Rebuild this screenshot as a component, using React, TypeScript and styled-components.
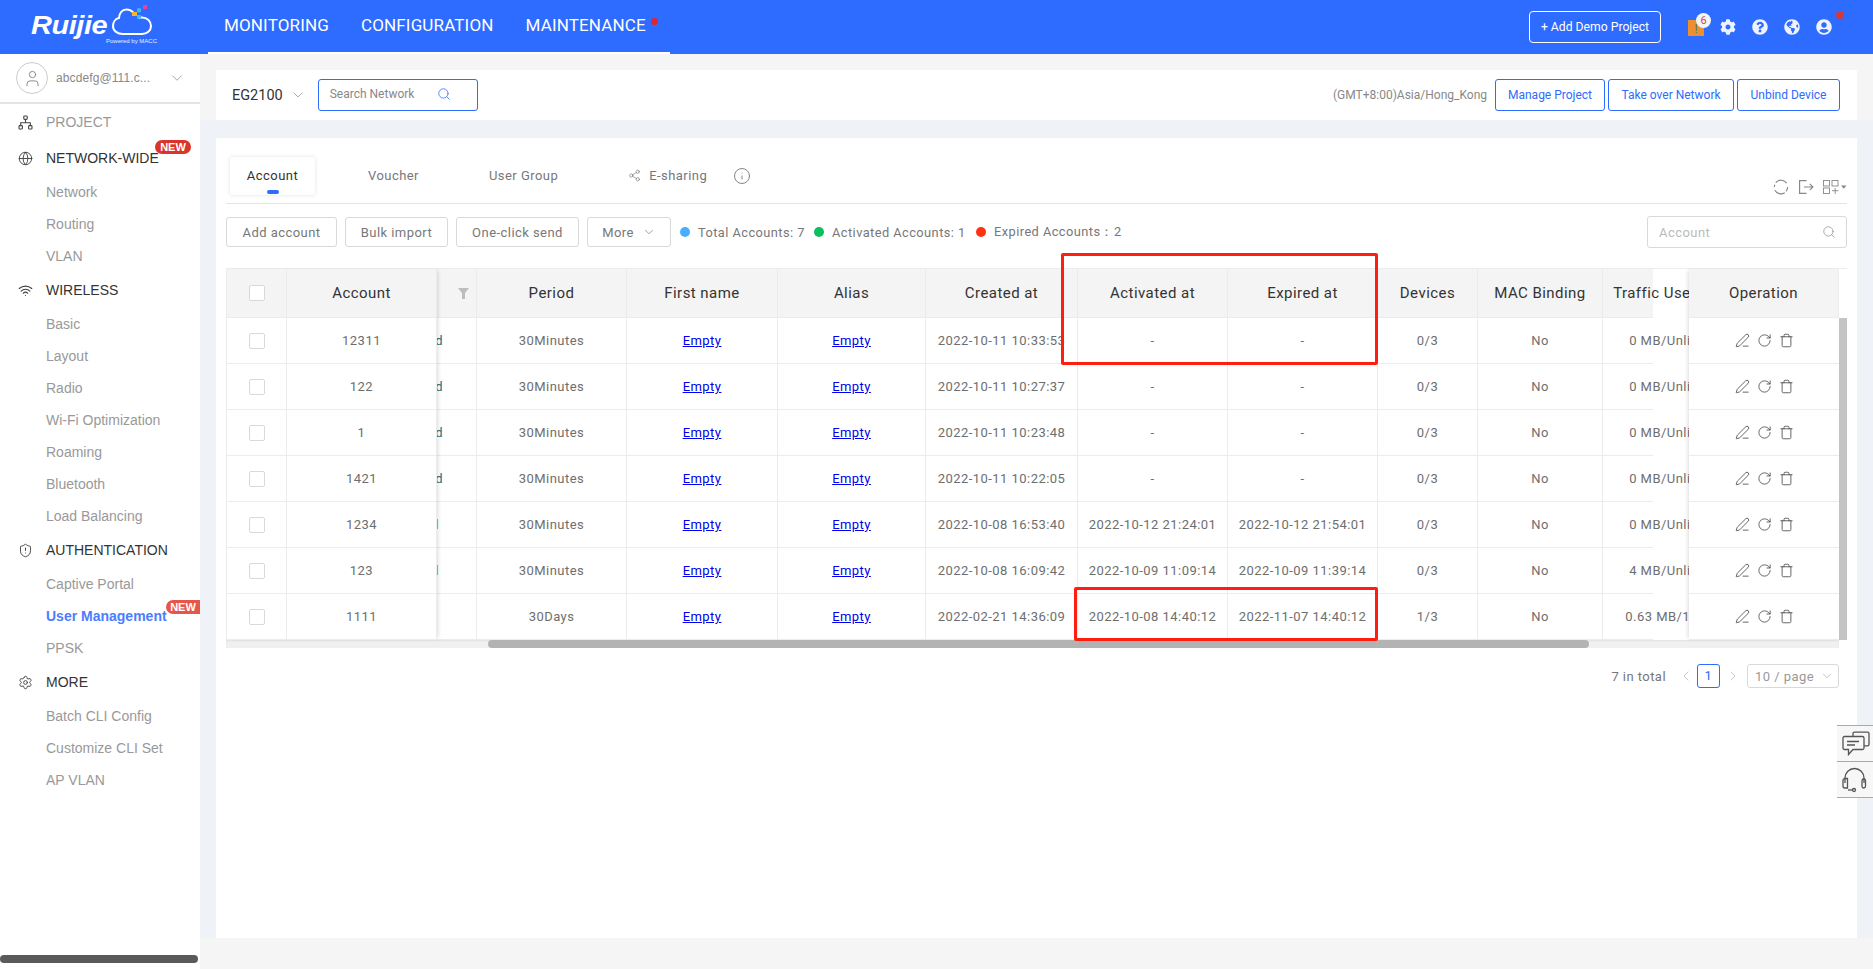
import React from "react";
import styled, { createGlobalStyle } from "styled-components";
import {
  ChevronDown, ChevronLeft, ChevronRight, Globe, Info, PenLine, RotateCw, Search,
  Settings, Share2, ShieldAlert, Trash, User, Wifi,
} from "lucide-react";
import { FaCog, FaGlobeAmericas, FaQuestionCircle, FaUserCircle } from "react-icons/fa";

const GlobalStyle = createGlobalStyle`
  html, body { margin: 0; height: 100%; overflow: hidden; }
  * { box-sizing: border-box; }
  body { font-family: Roboto, "Liberation Sans", sans-serif; background: #f0f3f6; }
`;

const Page = styled.div`
  position: relative;
  display: flex;
  flex-direction: column;
  width: 1873px;
  height: 969px;
  overflow: hidden;
`;

/* top bar */
const TopBar = styled.header`
  display: flex;
  align-items: stretch;
  height: 54px;
  background: #2e6bff;
  color: #fff;
  flex: none;
`;
const LogoBox = styled.div`
  width: 208px;
  padding: 4px 0 0 31px;
  flex: none;
`;
const LogoRow = styled.div`
  display: flex;
  align-items: flex-start;
  height: 33px;
`;
const LogoWord = styled.span`
  font-family: "Liberation Sans", sans-serif;
  font-style: italic;
  font-weight: 700;
  font-size: 25px;
  line-height: 25px;
  margin-top: 9px;
  width: 81px;
  letter-spacing: -0.4px;
  transform: scaleX(1.16);
  transform-origin: left;
`;
const PoweredBy = styled.div`
  font-family: "Liberation Sans", sans-serif;
  font-size: 6px;
  line-height: 8px;
  margin-left: 75px;
  opacity: 0.9;
  white-space: nowrap;
`;
const NavBar = styled.nav`
  display: flex;
  gap: 32px;
  width: 462px;
  padding: 0 16px;
  border-bottom: 2px solid #fff;
`;
const NavItem = styled.a`
  position: relative;
  font-size: 17px;
  line-height: 50px;
  letter-spacing: 0.15px;
`;
const NavDot = styled.i`
  position: absolute;
  top: 18px;
  right: -12px;
  width: 7px;
  height: 7px;
  border-radius: 50%;
  background: #e0262b;
`;
const TopRight = styled.div`
  display: flex;
  align-items: center;
  margin-left: auto;
  padding-right: 41px;
`;
const DemoButton = styled.button`
  width: 132px;
  height: 32px;
  margin-right: 27px;
  background: transparent;
  border: 1px solid #fff;
  border-radius: 4px;
  color: #fff;
  font: 12.2px Roboto, sans-serif;
`;
const TopIcons = styled.div`
  display: flex;
  align-items: center;
  gap: 16px;
`;
const TopIcon = styled.span`
  position: relative;
  display: flex;
  width: 16px;
  height: 16px;
  color: #eef3ff;
`;
const AlertSquare = styled.span`
  position: relative;
  display: block;
  width: 16px;
  height: 16px;
  margin-top: 1px;
  background: #ee8f2e;
  color: #3f6fd8;
  font-size: 13px;
  line-height: 18px;
  text-align: center;
`;
const CountBadge = styled.span`
  position: absolute;
  top: -7px;
  left: 8px;
  width: 15px;
  height: 15px;
  border-radius: 50%;
  background: #f4f4f4;
  color: #d9404a;
  font-size: 11px;
  line-height: 15px;
  text-align: center;
`;
const UserDot = styled.i`
  position: absolute;
  top: -8px;
  right: -12px;
  width: 8px;
  height: 8px;
  border-radius: 50%;
  background: #d33a3a;
`;

/* sidebar */
const Body = styled.div`
  display: flex;
  flex: 1;
  min-height: 0;
`;
const Sidebar = styled.aside`
  display: flex;
  flex-direction: column;
  width: 200px;
  flex: none;
  background: #fff;
  font-family: "Liberation Sans", sans-serif;
  font-size: 14px;
`;
const UserRow = styled.div`
  display: flex;
  align-items: center;
  height: 50px;
  padding: 0 0 0 16px;
  border-bottom: 2px solid #e4e4e4;
  color: #888;
  font-size: 12px;
`;
const Avatar = styled.span`
  display: flex;
  align-items: center;
  justify-content: center;
  width: 32px;
  height: 32px;
  margin-right: 8px;
  border: 1px solid #ccc;
  border-radius: 50%;
  color: #888;
`;
const UserName = styled.span`
  width: 112px;
  letter-spacing: 0.1px;
`;
const SideList = styled.div`
  flex: 1;
`;
const Heading = styled.div<{ $muted?: boolean }>`
  position: relative;
  display: flex;
  align-items: center;
  height: 36px;
  padding-left: 18px;
  color: ${(p) => (p.$muted ? "#999" : "#333")};
  svg { margin-right: 13px; color: #444; }
`;
const SubItem = styled.div<{ $active?: boolean }>`
  position: relative;
  height: 32px;
  padding-left: 46px;
  line-height: 32px;
  color: ${(p) => (p.$active ? "#4a7dff" : "#999")};
  font-weight: ${(p) => (p.$active ? 700 : 400)};
`;
const NewBadge = styled.span<{ $soft?: boolean }>`
  position: absolute;
  top: 0;
  left: ${(p) => (p.$soft ? "166px" : "155px")};
  width: ${(p) => (p.$soft ? "34px" : "36px")};
  height: 14px;
  border-radius: ${(p) => (p.$soft ? "7px 0 0 7px" : "7px")};
  background: ${(p) => (p.$soft ? "#e5574a" : "#d9352a")};
  color: #fff;
  font-size: 11px;
  font-weight: 700;
  line-height: 14px;
  text-align: center;
`;
const SideScroll = styled.div`
  width: 198px;
  height: 8px;
  margin-bottom: 6px;
  border-radius: 4px;
  background: #5a5a5a;
`;

/* main */
const Main = styled.main`
  display: flex;
  flex-direction: column;
  flex: 1;
  gap: 18px;
  padding: 16px 16px 31px;
  min-width: 0;
  background: linear-gradient(#f5f5f5 0 66px, #eff3f7 66px calc(100% - 31px), #f5f5f5 calc(100% - 31px));
`;
const HeaderCard = styled.div`
  display: flex;
  align-items: center;
  height: 50px;
  padding: 0 17px 0 16px;
  background: #fff;
  font-size: 12px;
`;
const NetName = styled.span`
  font-size: 14.5px;
  color: #333;
`;
const NetChevron = styled.span`
  display: flex;
  margin: 0 12px 0 7px;
  color: #888;
`;
const NetSearch = styled.div`
  display: flex;
  align-items: center;
  justify-content: space-between;
  width: 160px;
  height: 32px;
  padding: 0 26px 2px 11px;
  border: 1px solid #2e6bff;
  border-radius: 3px;
  color: #888;
  svg { color: #2e6bff; }
`;
const TimeZone = styled.span`
  margin: 0 5px 0 auto;
  color: #888;
`;
const HeaderButton = styled.button<{ $width: number }>`
  width: ${(p) => p.$width}px;
  height: 32px;
  margin-left: 3px;
  background: #fff;
  border: 1px solid #2e6bff;
  border-radius: 3px;
  color: #2e6bff;
  font: 12px Roboto, sans-serif;
`;
const MainCard = styled.section`
  flex: 1;
  padding: 19px 10px 0;
  background: #fff;
  color: #6e6e6e;
  font-size: 13px;
  letter-spacing: 0.45px;
`;
const TabsRow = styled.div`
  display: flex;
  align-items: center;
  height: 47px;
  padding: 0 0 9px 4px;
  border-bottom: 1px solid #e4e4e4;
`;
const TabList = styled.div`
  display: flex;
  align-items: center;
  gap: 70px;
`;
const Tab = styled.div<{ $active?: boolean }>`
  position: relative;
  display: flex;
  align-items: center;
  gap: 8px;
  color: ${(p) => (p.$active ? "#333" : "#777")};
  ${(p) =>
    p.$active
      ? `width: 85px; height: 38px; margin-right: -17px; justify-content: center; border-radius: 4px;
         box-shadow: 0 0 4px rgba(0,0,0,.12);`
      : ""}
`;
const TabPill = styled.i`
  position: absolute;
  left: 37px;
  bottom: 1px;
  width: 12px;
  height: 4px;
  border-radius: 2px;
  background: #2e6bff;
`;
const TabInfo = styled.span`
  display: flex;
  margin-left: 26px;
  color: #777;
`;
const ToolIcons = styled.div`
  display: flex;
  align-items: center;
  gap: 9px;
  margin-left: auto;
  margin-bottom: -22px;
  color: #888;
`;
const Toolbar = styled.div`
  display: flex;
  align-items: center;
  gap: 8px;
  height: 32px;
  margin-top: 12px;
`;
const ToolButton = styled.button<{ $width: number }>`
  display: flex;
  align-items: center;
  justify-content: center;
  gap: 8px;
  width: ${(p) => p.$width}px;
  height: 30px;
  background: #fff;
  border: 1px solid #d9d9d9;
  border-radius: 3px;
  color: #777;
  font: 13px Roboto, sans-serif;
  letter-spacing: 0.45px;
`;
const Legend = styled.div`
  display: flex;
  align-items: center;
  margin-left: 1px;
`;
const LegendDot = styled.i<{ $color: string }>`
  width: 10px;
  height: 10px;
  margin: 0 8px 0 0;
  border-radius: 50%;
  background: ${(p) => p.$color};
`;
const LegendText = styled.span<{ $width?: number }>`
  width: ${(p) => (p.$width ? `${p.$width}px` : "auto")};
  color: #777;
  font-size: 12.8px;
  white-space: nowrap;
`;
const AccountSearch = styled.div`
  display: flex;
  align-items: center;
  justify-content: space-between;
  width: 200px;
  height: 32px;
  margin-left: auto;
  padding: 0 10px 0 11px;
  border: 1px solid #d9d9d9;
  border-radius: 3px;
  color: #bbb;
  svg { color: #888; }
`;

/* table */
const TableFrame = styled.div`
  position: relative;
  margin-top: 20px;
`;
const TableBody = styled.div`
  display: flex;
  height: 372px;
  border-top: 1px solid #ececec;
  border-left: 1px solid #ececec;
`;
const FixedPane = styled.div<{ $side: "left" | "right" }>`
  position: relative;
  z-index: 1;
  flex: none;
  background: #fff;
  box-shadow: ${(p) => (p.$side === "left" ? "3px 0 4px -2px rgba(0,0,0,.14)" : "-3px 0 4px -2px rgba(0,0,0,.14)")};
`;
const ScrollPane = styled.div`
  flex: 1;
  min-width: 0;
  overflow: hidden;
`;
const ScrollInner = styled.div`
  width: 1296px;
  margin-left: -80px;
`;
const Row = styled.div<{ $cols: string; $head?: boolean }>`
  display: grid;
  grid-template-columns: ${(p) => p.$cols};
  height: ${(p) => (p.$head ? "49px" : "46px")};
  background: ${(p) => (p.$head ? "#f4f4f4" : "#fff")};
  border-bottom: 1px solid #ececec;
  color: ${(p) => (p.$head ? "#333" : "#6e6e6e")};
  font-size: ${(p) => (p.$head ? "15px" : "13px")};
`;
const Cell = styled.div`
  display: flex;
  align-items: center;
  justify-content: center;
  border-right: 1px solid #ececec;
  white-space: nowrap;
  overflow: hidden;
`;
const StatusCell = styled(Cell)<{ $pad: number; $color: string }>`
  justify-content: flex-end;
  padding-right: ${(p) => p.$pad}px;
  color: ${(p) => p.$color};
`;
const Check = styled.span`
  width: 16px;
  height: 16px;
  background: #fff;
  border: 1px solid #d9d9d9;
  border-radius: 2px;
`;
const EmptyLink = styled.a`
  color: #0000ee;
  text-decoration: underline;
`;
const Actions = styled(Cell)`
  gap: 7px;
  color: #444;
  border-right: none;
`;
const VScroll = styled.div`
  width: 8px;
  flex: none;
  padding-top: 49px;
`;
const VThumb = styled.div`
  height: 322px;
  background: #c4c4c4;
`;
const HScroll = styled.div`
  width: 1613px;
  height: 8px;
  background: #f0f0f0;
  box-shadow: inset 0 1px 2px rgba(0,0,0,.06);
`;
const HThumb = styled.div`
  width: 1101px;
  height: 8px;
  margin-left: 262px;
  border-radius: 4px;
  background: #b3b3b3;
`;
const Annotation = styled.div<{ $left: number; $top: number; $width: number; $height: number }>`
  position: absolute;
  z-index: 2;
  left: ${(p) => p.$left}px;
  top: ${(p) => p.$top}px;
  width: ${(p) => p.$width}px;
  height: ${(p) => p.$height}px;
  border: 3px solid #ff1c10;
  border-radius: 2px;
  pointer-events: none;
`;

/* pagination */
const Pager = styled.div`
  display: flex;
  align-items: center;
  justify-content: flex-end;
  margin-top: 16px;
  padding-right: 8px;
  height: 24px;
  color: #777;
  font-size: 13px;
`;
const PagerArrow = styled.span<{ $left: number; $right: number }>`
  display: flex;
  margin: 0 ${(p) => p.$right}px 0 ${(p) => p.$left}px;
  color: #bbb;
`;
const PageBox = styled.span`
  width: 23px;
  height: 24px;
  border: 1px solid #2e6bff;
  border-radius: 3px;
  color: #2e6bff;
  line-height: 22px;
  text-align: center;
`;
const PageSize = styled.span`
  display: flex;
  align-items: center;
  justify-content: space-between;
  width: 92px;
  height: 24px;
  padding: 0 4px 0 7px;
  border: 1px solid #d9d9d9;
  border-radius: 3px;
  color: #999;
`;

/* floating help */
const Floating = styled.div`
  position: absolute;
  top: 725px;
  right: 0;
  z-index: 3;
  width: 36px;
  background: #f7f7f7;
  border-bottom: 1px solid #aaa;
`;
const FloatingItem = styled.div`
  display: flex;
  align-items: center;
  height: 36px;
  padding-left: 5px;
  border-top: 1px solid #aaa;
  color: #555;
`;

const LEFT_COLS = "60px 150px";
const MID_COLS = "120px 150px 151px 148px 152px 150px 150px 100px 125px 150px";

const rows = [
  { account: "12311", status: "Inactivated", pad: 33, color: "#2b6f7a", period: "30Minutes", created: "2022-10-11 10:33:53", activated: "-", expired: "-", devices: "0/3", traffic: "0 MB/Unlimited" },
  { account: "122", status: "Inactivated", pad: 33, color: "#2b6f7a", period: "30Minutes", created: "2022-10-11 10:27:37", activated: "-", expired: "-", devices: "0/3", traffic: "0 MB/Unlimited" },
  { account: "1", status: "Inactivated", pad: 33, color: "#2b6f7a", period: "30Minutes", created: "2022-10-11 10:23:48", activated: "-", expired: "-", devices: "0/3", traffic: "0 MB/Unlimited" },
  { account: "1421", status: "Inactivated", pad: 33, color: "#2b6f7a", period: "30Minutes", created: "2022-10-11 10:22:05", activated: "-", expired: "-", devices: "0/3", traffic: "0 MB/Unlimited" },
  { account: "1234", status: "Expired", pad: 37, color: "#58b0f5", period: "30Minutes", created: "2022-10-08 16:53:40", activated: "2022-10-12 21:24:01", expired: "2022-10-12 21:54:01", devices: "0/3", traffic: "0 MB/Unlimited" },
  { account: "123", status: "Expired", pad: 37, color: "#58b0f5", period: "30Minutes", created: "2022-10-08 16:09:42", activated: "2022-10-09 11:09:14", expired: "2022-10-09 11:39:14", devices: "0/3", traffic: "4 MB/Unlimited" },
  { account: "1111", status: "Activated", pad: 60, color: "#20b060", period: "30Days", created: "2022-02-21 14:36:09", activated: "2022-10-08 14:40:12", expired: "2022-11-07 14:40:12", devices: "1/3", traffic: "0.63 MB/100 MB" },
];

const sideGroups = [
  { icon: <ProjectIcon />, title: "PROJECT", muted: true, items: [] as string[] },
  { icon: <Globe size={15} strokeWidth={1.5} />, title: "NETWORK-WIDE", isNew: true, items: ["Network", "Routing", "VLAN"] },
  { icon: <Wifi size={15} strokeWidth={1.8} />, title: "WIRELESS", items: ["Basic", "Layout", "Radio", "Wi-Fi Optimization", "Roaming", "Bluetooth", "Load Balancing"] },
  { icon: <ShieldAlert size={15} strokeWidth={1.5} />, title: "AUTHENTICATION", items: ["Captive Portal", "User Management", "PPSK"] },
  { icon: <Settings size={15} strokeWidth={1.5} />, title: "MORE", items: ["Batch CLI Config", "Customize CLI Set", "AP VLAN"] },
];

function ProjectIcon() {
  return (
    <svg width="15" height="15" viewBox="0 0 15 15" fill="none" stroke="currentColor" strokeWidth="1.1">
      <rect x="5.8" y="1" width="3.4" height="3.4" rx="0.8" />
      <rect x="1" y="10.6" width="3.4" height="3.4" rx="0.8" />
      <rect x="10.6" y="10.6" width="3.4" height="3.4" rx="0.8" />
      <path d="M7.5 4.4v3.4M2.7 10.6V7.8h9.6v2.8" />
    </svg>
  );
}

function CloudLogo() {
  return (
    <svg width="40" height="32" viewBox="0 0 40 32" fill="none" style={{ flex: "none" }}>
      <path
        d="M27 13.8c1-.3 2-.4 3-.4 5 0 9 3.8 9 8.6 0 4.8-4 8-9 8H11C5.500 30 1 27 1 22c0-4 2.500-7.300 6-8 .4-4.800 3-8.500 7.500-8.500 2.500 0 4.800 1 6.500 2.800"
        stroke="#fff"
        strokeWidth="2"
        strokeLinecap="round"
      />
      <rect x="31" y="1" width="4" height="4" fill="#f0409a" />
      <rect x="25" y="4.300" width="4" height="4" fill="#3fb8ee" />
      <rect x="20" y="8" width="5" height="4" fill="#f5b62a" />
      <rect x="25" y="11" width="4" height="3.500" fill="#3fb8ee" />
    </svg>
  );
}

function SyncIcon() {
  return (
    <svg width="16" height="16" viewBox="0 0 15 15" fill="none" stroke="currentColor" strokeWidth="1.1">
      <path d="M2.600 3.500A6.300 6.300 0 0 1 12.800 4M13.700 7.500a6.300 6.300 0 0 1-1.400 4M11 12.800A6.300 6.300 0 0 1 1.800 10.500M1.300 7.500c0-.8.100-1.500.4-2.200" />
    </svg>
  );
}

function ExportIcon() {
  return (
    <svg width="16" height="16" viewBox="0 0 15 15" fill="none" stroke="currentColor" strokeWidth="1.1">
      <path d="M8 1.500H1.500v12H8M5.500 7.500h8.500M11 4.500l3 3-3 3" />
    </svg>
  );
}

function ColumnsIcon() {
  return (
    <svg width="24" height="16" viewBox="0 0 24 15" fill="none" stroke="currentColor" strokeWidth="0.9">
      <rect x="0.500" y="1" width="6" height="5.500" />
      <rect x="9" y="1" width="6" height="5.500" />
      <rect x="0.500" y="8.500" width="6" height="5.500" />
      <path d="M9 11.200h6.500M12.200 8.500v6" />
      <path d="M18 6h5.500l-2.750 3.300z" fill="currentColor" stroke="none" />
    </svg>
  );
}

function FilterIcon() {
  return (
    <svg width="11" height="11" viewBox="0 0 11 11" fill="#bdbdbd">
      <path d="M0 0h11L7 5v6H4V5z" />
    </svg>
  );
}

function ChatIcon() {
  return (
    <svg width="28" height="26" viewBox="0 0 28 26" fill="none" stroke="currentColor" strokeWidth="1.300">
      <path d="M11 5V2.500c0-.8.600-1.400 1.400-1.400h13.200c.8 0 1.400.6 1.400 1.400v11c0 .8-.6 1.400-1.400 1.400H22" />
      <path d="M2.500 5.500h18c.8 0 1.500.7 1.500 1.500v10c0 .8-.7 1.500-1.500 1.500H11l-4.500 5v-5h-4C1.700 18.500 1 17.800 1 17V7c0-.8.700-1.500 1.500-1.500z" />
      <path d="M5 10.500h12M5 14h8" />
    </svg>
  );
}

function HeadsetIcon() {
  return (
    <svg width="26" height="26" viewBox="0 0 26 26" fill="none" stroke="currentColor" strokeWidth="1.300">
      <path d="M3 16V11a9.500 9.500 0 0 1 19 0v5" />
      <path d="M3 11.500h0c-1.200 0-2 .9-2 2V19c0 1.100.8 2 2 2h2.500V11.500z" />
      <rect x="20" y="12" width="3.500" height="9" rx="1.700" />
      <path d="M6 23h4.500" />
      <circle cx="12" cy="23" r="1.500" />
    </svg>
  );
}

export default function App() {
  return (
    <Page>
      <GlobalStyle />
      <TopBar>
        <LogoBox>
          <LogoRow>
            <LogoWord>Ruijie</LogoWord>
            <CloudLogo />
          </LogoRow>
          <PoweredBy>Powered by MACC</PoweredBy>
        </LogoBox>
        <NavBar>
          <NavItem>MONITORING</NavItem>
          <NavItem>CONFIGURATION</NavItem>
          <NavItem>
            MAINTENANCE
            <NavDot />
          </NavItem>
        </NavBar>
        <TopRight>
          <DemoButton>+ Add Demo Project</DemoButton>
          <TopIcons>
            <TopIcon>
              <AlertSquare>
                !<CountBadge>6</CountBadge>
              </AlertSquare>
            </TopIcon>
            <TopIcon><FaCog size={16} /></TopIcon>
            <TopIcon><FaQuestionCircle size={16} /></TopIcon>
            <TopIcon><FaGlobeAmericas size={16} /></TopIcon>
            <TopIcon>
              <FaUserCircle size={16} />
              <UserDot />
            </TopIcon>
          </TopIcons>
        </TopRight>
      </TopBar>
      <Body>
        <Sidebar>
          <UserRow>
            <Avatar><User size={19} strokeWidth={1.2} /></Avatar>
            <UserName>abcdefg@111.c...</UserName>
            <ChevronDown size={18} strokeWidth={1} />
          </UserRow>
          <SideList>
            {sideGroups.map((group) => (
              <React.Fragment key={group.title}>
                <Heading $muted={group.muted}>
                  {group.icon}
                  {group.title}
                  {group.isNew && <NewBadge>NEW</NewBadge>}
                </Heading>
                {group.items.map((item) => (
                  <SubItem key={item} $active={item === "User Management"}>
                    {item}
                    {item === "User Management" && <NewBadge $soft>NEW</NewBadge>}
                  </SubItem>
                ))}
              </React.Fragment>
            ))}
          </SideList>
          <SideScroll />
        </Sidebar>
        <Main>
          <HeaderCard>
            <NetName>EG2100</NetName>
            <NetChevron><ChevronDown size={16} strokeWidth={1} /></NetChevron>
            <NetSearch>
              Search Network
              <Search size={14} strokeWidth={1.3} />
            </NetSearch>
            <TimeZone>(GMT+8:00)Asia/Hong_Kong</TimeZone>
            <HeaderButton $width={110}>Manage Project</HeaderButton>
            <HeaderButton $width={126}>Take over Network</HeaderButton>
            <HeaderButton $width={103}>Unbind Device</HeaderButton>
          </HeaderCard>
          <MainCard>
            <TabsRow>
              <TabList>
                <Tab $active>
                  Account
                  <TabPill />
                </Tab>
                <Tab>Voucher</Tab>
                <Tab>User Group</Tab>
                <Tab><Share2 size={13} strokeWidth={1.2} />E-sharing</Tab>
              </TabList>
              <TabInfo><Info size={18} strokeWidth={1.2} /></TabInfo>
              <ToolIcons>
                <SyncIcon />
                <ExportIcon />
                <ColumnsIcon />
              </ToolIcons>
            </TabsRow>
            <Toolbar>
              <ToolButton $width={111}>Add account</ToolButton>
              <ToolButton $width={103}>Bulk import</ToolButton>
              <ToolButton $width={123}>One-click send</ToolButton>
              <ToolButton $width={84}>More <ChevronDown size={14} strokeWidth={1.2} /></ToolButton>
              <Legend>
                <LegendDot $color="#4aaeff" /><LegendText $width={116}>Total Accounts: 7</LegendText>
                <LegendDot $color="#0bbf5f" /><LegendText $width={144}>Activated Accounts: 1</LegendText>
                <LegendDot $color="#ff3210" /><LegendText>Expired Accounts：2</LegendText>
              </Legend>
              <AccountSearch>
                Account
                <Search size={14} strokeWidth={1.2} />
              </AccountSearch>
            </Toolbar>
            <TableFrame>
              <TableBody>
                <FixedPane $side="left">
                  <Row $cols={LEFT_COLS} $head>
                    <Cell><Check /></Cell>
                    <Cell>Account</Cell>
                  </Row>
                  {rows.map((row) => (
                    <Row $cols={LEFT_COLS} key={row.account}>
                      <Cell><Check /></Cell>
                      <Cell>{row.account}</Cell>
                    </Row>
                  ))}
                </FixedPane>
                <ScrollPane>
                  <ScrollInner>
                    <Row $cols={MID_COLS} $head>
                      <StatusCell $pad={7} $color="#bdbdbd"><FilterIcon /></StatusCell>
                      <Cell>Period</Cell>
                      <Cell>First name</Cell>
                      <Cell>Alias</Cell>
                      <Cell>Created at</Cell>
                      <Cell>Activated at</Cell>
                      <Cell>Expired at</Cell>
                      <Cell>Devices</Cell>
                      <Cell>MAC Binding</Cell>
                      <Cell>Traffic Used/Total</Cell>
                    </Row>
                    {rows.map((row) => (
                      <Row $cols={MID_COLS} key={row.account}>
                        <StatusCell $pad={row.pad} $color={row.color}>{row.status}</StatusCell>
                        <Cell>{row.period}</Cell>
                        <Cell><EmptyLink>Empty</EmptyLink></Cell>
                        <Cell><EmptyLink>Empty</EmptyLink></Cell>
                        <Cell>{row.created}</Cell>
                        <Cell>{row.activated}</Cell>
                        <Cell>{row.expired}</Cell>
                        <Cell>{row.devices}</Cell>
                        <Cell>No</Cell>
                        <Cell>{row.traffic}</Cell>
                      </Row>
                    ))}
                  </ScrollInner>
                </ScrollPane>
                <FixedPane $side="right">
                  <Row $cols="150px" $head>
                    <Cell>Operation</Cell>
                  </Row>
                  {rows.map((row) => (
                    <Row $cols="150px" key={row.account}>
                      <Actions>
                        <PenLine size={15} strokeWidth={1.3} />
                        <RotateCw size={15} strokeWidth={1.3} />
                        <Trash size={15} strokeWidth={1.3} />
                      </Actions>
                    </Row>
                  ))}
                </FixedPane>
                <VScroll><VThumb /></VScroll>
              </TableBody>
              <HScroll><HThumb /></HScroll>
              <Annotation $left={835} $top={-15} $width={317} $height={112} />
              <Annotation $left={848} $top={319} $width={304} $height={54} />
            </TableFrame>
            <Pager>
              7 in total
              <PagerArrow $left={12} $right={3}><ChevronLeft size={16} strokeWidth={1.2} /></PagerArrow>
              <PageBox>1</PageBox>
              <PagerArrow $left={5} $right={6}><ChevronRight size={16} strokeWidth={1.2} /></PagerArrow>
              <PageSize>10 / page <ChevronDown size={14} strokeWidth={1} /></PageSize>
            </Pager>
          </MainCard>
        </Main>
      </Body>
      <Floating>
        <FloatingItem><ChatIcon /></FloatingItem>
        <FloatingItem><HeadsetIcon /></FloatingItem>
      </Floating>
    </Page>
  );
}
